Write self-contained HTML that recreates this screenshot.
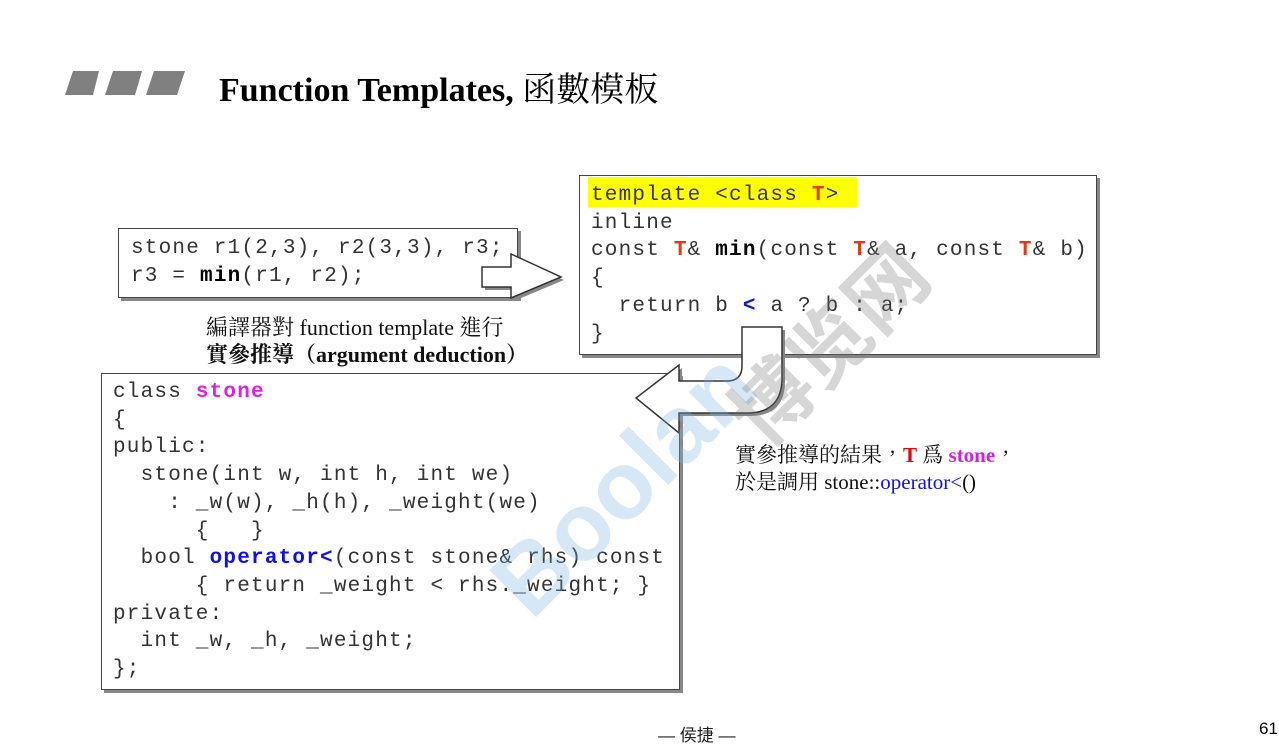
<!DOCTYPE html>
<html><head><meta charset="utf-8"><style>
body{margin:0;width:1279px;height:749px;background:#fff;position:relative;overflow:hidden;font-family:"Liberation Serif","Noto Serif CJK SC",serif;}
.a{position:absolute;white-space:pre;}
.code{font-family:"Liberation Mono",monospace;font-size:21px;letter-spacing:1.2px;line-height:27.7px;color:#333;}
.box{position:absolute;background:#fff;border:1.5px solid #444;box-shadow:3px 3px 0 #888;}
.r{color:#e8380d;font-weight:bold}
.b{font-weight:bold;color:#000}
.m{color:#e020e0;font-weight:bold}
.bl{color:#1010ee;font-weight:bold}
.cap{font-size:22px;color:#111;font-family:"Liberation Serif","Noto Serif CJK TC",serif;}
</style></head><body>
<svg class="a" style="left:0;top:0" width="1279" height="749">
<polygon points="65,95 73,71 99,71 93,95" fill="#808080"/>
<polygon points="105,95 113,71 142,71 135,95" fill="#808080"/>
<polygon points="146,95 154,71 185,71 177,95" fill="#808080"/>
</svg>
<div class="a" style="left:219px;top:62px;font-size:34px;font-weight:bold;color:#000;font-family:'Liberation Serif','Noto Serif CJK TC',serif;">Function Templates, <span style="font-weight:normal">函數模板</span></div>

<div class="box" style="left:118px;top:228px;width:398px;height:68px;"></div>
<div class="a code" style="left:131px;top:235px;">stone r1(2,3), r2(3,3), r3;
r3 = <span class="b">min</span>(r1, r2);</div>

<svg class="a" style="left:0;top:0" width="1279" height="749">
<polygon points="485,270 514,270 514,257 564,280 514,301 514,290 485,290" fill="#888"/>
<polygon points="482,267 511,267 511,254 561,277 511,298 511,287 482,287" fill="#fff" stroke="#333" stroke-width="1.5"/>
</svg>

<div class="a cap" style="left:206px;top:311px;">編譯器對 function template 進行</div>
<div class="a cap" style="left:206px;top:338px;font-weight:bold;">實參推導（argument deduction）</div>

<div class="box" style="left:579px;top:175px;width:516px;height:178px;"></div>
<div class="a" style="left:588px;top:177px;width:269px;height:30px;background:#ffff00;"></div>
<div class="a code" style="left:591px;top:182px;">template &lt;class <span class="r">T</span>&gt;
inline
const <span class="r">T</span>&amp; <span class="b">min</span>(const <span class="r">T</span>&amp; a, const <span class="r">T</span>&amp; b)
{
  return b <span class="bl">&lt;</span> a ? b : a;
}</div>

<div class="box" style="left:101px;top:373px;width:577px;height:315px;"></div>
<div class="a code" style="left:113px;top:379px;">class <span class="m">stone</span>
{
public:
  stone(int w, int h, int we)
    : _w(w), _h(h), _weight(we)
      {   }
  bool <span class="bl">operator&lt;</span>(const stone&amp; rhs) const
      { return _weight &lt; rhs._weight; }
private:
  int _w, _h, _weight;
};</div>

<svg class="a" style="left:0;top:0" width="1279" height="749">
<path d="M745,330 L785,330 L785,381 Q785,416 750,416 L682,416 L682,436 L639,401 L682,368 L682,384 L730,384 Q745,384 745,369 Z" fill="#888"/>
<path d="M742,327 L782,327 L782,378 Q782,413 747,413 L679,413 L679,433 L636,398 L679,365 L679,381 L727,381 Q742,381 742,366 Z" fill="#fff" stroke="#333" stroke-width="1.5"/>
</svg>

<div class="a cap" style="left:735px;top:439px;font-size:21px;">實參推導的結果，<span style="color:#e8000d;font-weight:bold">T</span> 爲 <span style="color:#d020e0;font-weight:bold">stone</span>，</div>
<div class="a cap" style="left:735px;top:466px;font-size:21px;">於是調用 stone::<span style="color:#1010ee">operator&lt;</span>()</div>

<div class="a" style="left:470px;top:560px;font-family:'Liberation Sans',sans-serif;font-weight:bold;font-size:96px;color:rgba(120,180,225,0.3);transform:rotate(-45deg);transform-origin:left top;">Boolan</div>
<div class="a" style="left:700px;top:385px;font-family:'Noto Sans CJK SC',sans-serif;font-weight:bold;font-size:80px;color:rgba(120,120,120,0.3);transform:rotate(-45deg);transform-origin:left top;">博览网</div>

<div class="a" style="left:658px;top:721px;font-size:17px;color:#222;font-family:'Liberation Sans','Noto Sans CJK TC',sans-serif;">— 侯捷 —</div>
<div class="a" style="left:1259px;top:719px;font-size:17px;color:#000;font-family:'Liberation Sans',sans-serif;">61</div>
</body></html>
